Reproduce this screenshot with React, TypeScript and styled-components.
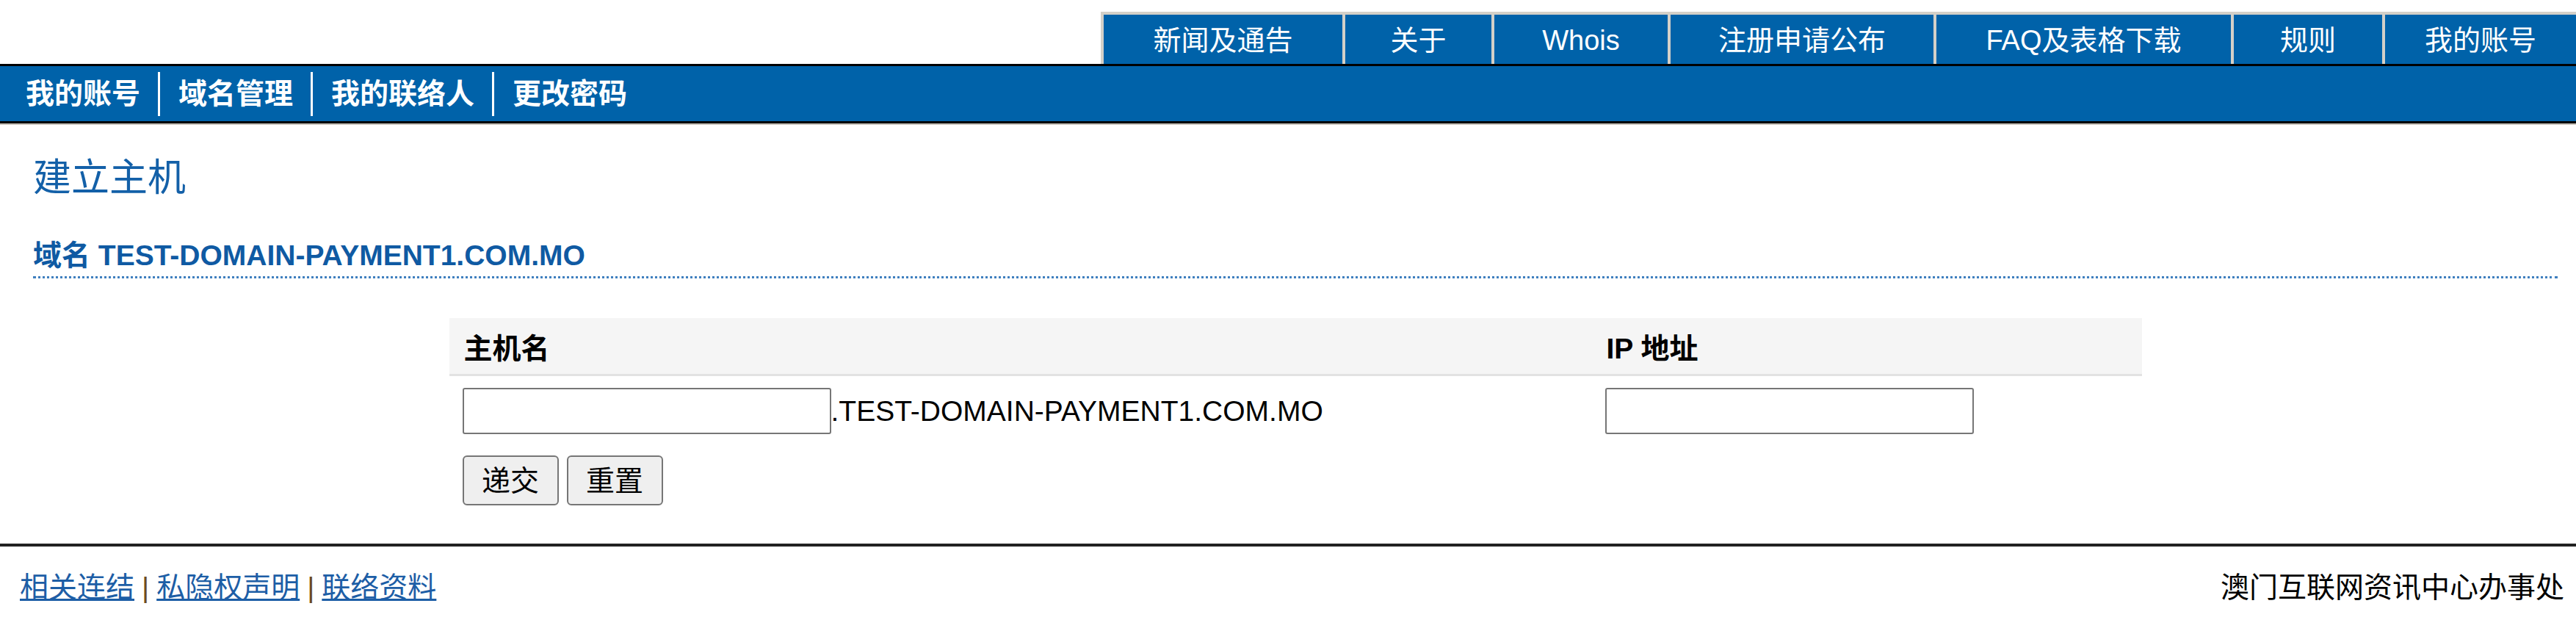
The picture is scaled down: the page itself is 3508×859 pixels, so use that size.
import { Fragment } from "react";
import styled, { createGlobalStyle } from "styled-components";

const GlobalStyle = createGlobalStyle`
  html, body {
    margin: 0;
    padding: 0;
    background: #ffffff;
  }
  body {
    font-family: "Liberation Sans", "Noto Sans CJK SC", Arial, sans-serif;
    font-size: 39px;
    color: #000;
  }
`;

const BLUE = "#0062a9";

const Page = styled.div`
  width: 3508px;
  min-height: 859px;
  display: flex;
  flex-direction: column;
`;

const TopRow = styled.div`
  display: flex;
  justify-content: flex-end;
  padding-top: 16px;
`;

const Tab = styled.a<{ $w: number }>`
  box-sizing: border-box;
  flex: none;
  width: ${(p) => p.$w}px;
  height: 71px;
  display: flex;
  align-items: center;
  justify-content: center;
  padding-top: 2px;
  background: ${BLUE};
  border-top: 4px solid #d4d0c8;
  border-left: 4px solid #d4d0c8;
  color: #fff;
  font-size: 38px;
  line-height: 1;
  text-decoration: none;
  white-space: nowrap;
`;

const SubNav = styled.div`
  display: flex;
  align-items: center;
  height: 75px;
  padding-left: 10px;
  background: ${BLUE};
  border-top: 3px solid #000;
  border-bottom: 3px solid #000;
  box-shadow: 0 2px 0 #c8c4bc;
`;

const SubItem = styled.a`
  padding: 0 24px 0 25px;
  color: #fff;
  font-weight: bold;
  font-size: 39px;
  line-height: 1;
  text-decoration: none;
  white-space: nowrap;
`;

const SubSep = styled.span`
  width: 3px;
  height: 60px;
  background: #fff;
`;

const Content = styled.div`
  padding: 0 25px 0 45px;
`;

const Title = styled.h1`
  margin: 44px 0 0;
  font-size: 52px;
  line-height: 60px;
  font-weight: normal;
  color: #1360a8;
`;

const DomainHead = styled.h2`
  margin: 54px 0 0;
  padding-bottom: 6px;
  font-size: 39px;
  line-height: 44px;
  font-weight: bold;
  color: #0f5aa3;
  border-bottom: 3px dotted #3f7fbf;
`;

const FormTable = styled.div`
  width: 2305px;
  margin: 54px auto 0;
  display: grid;
  grid-template-columns: 1556px 1fr;
`;

const HeadCell = styled.div`
  height: 76px;
  display: flex;
  align-items: center;
  padding-left: 20px;
  background: #f5f5f5;
  border-bottom: 3px solid #e2e2e2;
  font-weight: bold;
  font-size: 39px;
`;

const Cell = styled.div`
  display: flex;
  align-items: center;
  padding: 16px 0 0 18px;
  font-size: 39px;
`;

const TextInput = styled.input`
  box-sizing: border-box;
  width: 502px;
  height: 63px;
  margin: 0;
  border: 2px solid #767676;
  border-radius: 3px;
  background: #fff;
  font-size: 30px;
`;

const Suffix = styled.span`
  white-space: nowrap;
  line-height: 1;
`;

const ButtonRow = styled.div`
  grid-column: 1 / span 2;
  display: flex;
  gap: 11px;
  padding: 29px 0 0 18px;
`;

const Button = styled.button`
  box-sizing: border-box;
  width: 131px;
  height: 68px;
  padding: 0;
  border: 2px solid #767676;
  border-radius: 6px;
  background: #efefef;
  font-family: "Liberation Sans", "Noto Sans CJK SC", sans-serif;
  font-size: 39px;
  line-height: 1;
  color: #000;
`;

const Footer = styled.div`
  margin-top: 52px;
  border-top: 4px solid #222;
  display: flex;
  justify-content: space-between;
  align-items: center;
  padding: 34px 16px 0 27px;
  font-size: 39px;
  line-height: 44px;
`;

const FootLinks = styled.div`
  display: flex;
  align-items: center;
  gap: 10px;
`;

const FootLink = styled.a`
  color: #1d5ea6;
  text-decoration: underline;
`;

const Bar = styled.span`
  color: #6b4a22;
`;

const tabs: [string, number][] = [
  ["新闻及通告", 329],
  ["关于", 203],
  ["Whois", 240],
  ["注册申请公布", 362],
  ["FAQ及表格下载", 405],
  ["规则", 206],
  ["我的账号", 264],
];

const subs = ["我的账号", "域名管理", "我的联络人", "更改密码"];

export default function App() {
  return (
    <Page>
      <GlobalStyle />
      <TopRow>
        {tabs.map(([label, w]) => (
          <Tab key={label} $w={w} href="#">
            {label}
          </Tab>
        ))}
      </TopRow>
      <SubNav>
        {subs.map((s, i) => (
          <Fragment key={s}>
            {i > 0 && <SubSep />}
            <SubItem href="#">{s}</SubItem>
          </Fragment>
        ))}
      </SubNav>
      <Content>
        <Title>建立主机</Title>
        <DomainHead>域名 TEST-DOMAIN-PAYMENT1.COM.MO</DomainHead>
        <FormTable>
          <HeadCell>主机名</HeadCell>
          <HeadCell>IP 地址</HeadCell>
          <Cell>
            <TextInput type="text" />
            <Suffix>.TEST-DOMAIN-PAYMENT1.COM.MO</Suffix>
          </Cell>
          <Cell>
            <TextInput type="text" />
          </Cell>
          <ButtonRow>
            <Button>递交</Button>
            <Button>重置</Button>
          </ButtonRow>
        </FormTable>
      </Content>
      <Footer>
        <FootLinks>
          <FootLink href="#">相关连结</FootLink>
          <Bar>|</Bar>
          <FootLink href="#">私隐权声明</FootLink>
          <Bar>|</Bar>
          <FootLink href="#">联络资料</FootLink>
        </FootLinks>
        <span>澳门互联网资讯中心办事处</span>
      </Footer>
    </Page>
  );
}
